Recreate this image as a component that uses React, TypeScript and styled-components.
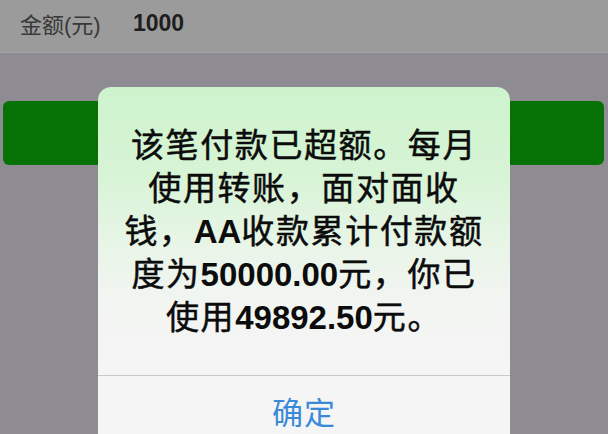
import styled, { createGlobalStyle } from "styled-components"

const GlobalStyle = createGlobalStyle`
    html, body {
        margin: 0;
        padding: 0;
        background: #8e8c92;
    }
    body {
        font-family: "Liberation Sans", "Noto Sans CJK SC", sans-serif;
    }
`
const Page = styled.div`
    position: relative;
    width: 608px;
    height: 434px;
    overflow: hidden;
    background: #8e8c92;
`
const AmountRow = styled.div`
    height: 53px;
    box-sizing: border-box;
    display: flex;
    align-items: center;
    padding: 0 0 6px 20px;
    background: #9b9b9b;
    border-bottom: 1px solid #a3a3a3;
    font-size: 22px;
    color: #383838;
    >.label{
        width: 113px;
    }
    >.value{
        font-size: 23px;
        font-weight: bold;
        color: #1e1e1e;
    }
`
const Body = styled.div`
    padding: 48px 4px 0 3px;
`
const GreenButton = styled.div`
    height: 64px;
    border-radius: 6px;
    background: #067206;
`
const Overlay = styled.div`
    position: absolute;
    left: 98px;
    top: 87px;
    width: 412px;
    height: 360px;
    border-radius: 13px;
    background: linear-gradient(180deg, #cdf3cc 0%, #d8f4d6 25%, #e9f5e8 45%, #f3f5f3 62%, #f5f5f5 100%);
    display: flex;
    flex-direction: column;
    overflow: hidden;
`
const Message = styled.div`
    height: 288px;
    box-sizing: border-box;
    padding-top: 37px;
    text-align: center;
    font-size: 33px;
    font-weight: 400;
    line-height: 43px;
    letter-spacing: 1.6px;
    color: #0c0c0c;
    -webkit-text-stroke: 0.5px #0c0c0c;
`
const Line = styled.div`
    white-space: nowrap;
    >b{
        font-weight: bold;
        letter-spacing: 0;
        -webkit-text-stroke: 0;
    }
`
const Divider = styled.div`
    height: 1px;
    background: #c9c9c9;
`
const Confirm = styled.div`
    height: 68px;
    display: flex;
    justify-content: center;
    align-items: center;
    font-family: "Noto Sans CJK SC", sans-serif;
    font-size: 31px;
    color: #3a8ad8;
    letter-spacing: 1px;
`

export default function App() {
    return (
        <Page>
            <GlobalStyle />
            <AmountRow>
                <span className="label">金额(元)</span>
                <span className="value">1000</span>
            </AmountRow>
            <Body>
                <GreenButton />
            </Body>
            <Overlay>
                <Message>
                    <Line>该笔付款已超额。每月</Line>
                    <Line>使用转账，面对面收</Line>
                    <Line>钱，<b>AA</b>收款累计付款额</Line>
                    <Line>度为<b>50000.00</b>元，你已</Line>
                    <Line>使用<b>49892.50</b>元。</Line>
                </Message>
                <Divider />
                <Confirm>确定</Confirm>
            </Overlay>
        </Page>
    )
}
